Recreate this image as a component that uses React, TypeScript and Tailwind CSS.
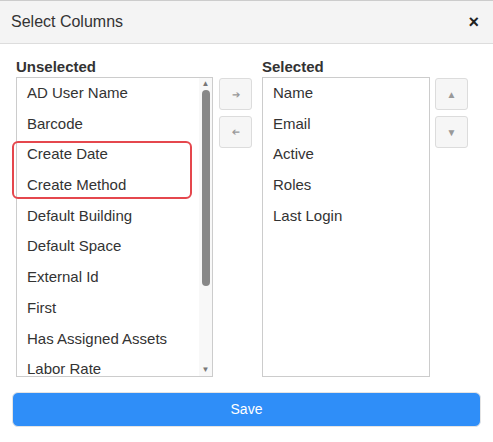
import React from 'react'

const unselected = ['AD User Name', 'Barcode', 'Create Date', 'Create Method', 'Default Building', 'Default Space', 'External Id', 'First', 'Has Assigned Assets', 'Labor Rate']
const selected = ['Name', 'Email', 'Active', 'Roles', 'Last Login']

function SmallBtn({ children }: { children: React.ReactNode }) {
  return (
    <button className="w-[33px] h-[32px] border border-[#dcdcdc] rounded-[3px] bg-[#f6f6f6] flex items-center justify-center text-[#999] text-[10px]">
      {children}
    </button>
  )
}

export default function App() {
  return (
    <div className="w-[493px] h-[442px] bg-white text-[#333] relative overflow-hidden" style={{ fontFamily: 'Arial, "Liberation Sans", sans-serif' }}>
      {/* Header */}
      <div className="h-[44px] bg-[#f4f4f4] border-b border-[#ddd] border-t border-t-[#ccc] flex items-center justify-between pl-[11px] pr-[14px]">
        <span className="text-[16px] text-[#333]">Select Columns</span>
        <span className="text-[18px] font-bold text-[#222]">×</span>
      </div>

      <div className="flex pl-[16px] pt-[13px] gap-[6px]">
        <div className="flex flex-col">
          <div className="text-[15px] font-bold h-[20px] leading-[20px]">Unselected</div>
          <div className="w-[197px] h-[300px] border border-[#ccc] flex relative">
            <div className="flex-1 overflow-hidden pt-[4px]">
              {unselected.map(u => (
                <div key={u} className="h-[30.7px] pl-[10px] text-[15px] leading-[22px]">{u}</div>
              ))}
            </div>
            <div className="w-[13px] bg-[#f8f8f8] flex flex-col items-center justify-between py-[2px]">
              <span className="text-[#777] text-[8px] leading-none">▲</span>
              <div className="w-[8px] flex-1 my-[2px] bg-[#888] rounded-full mb-[80px]" />
              <span className="text-[#777] text-[8px] leading-none">▼</span>
            </div>
          </div>
        </div>

        <div className="flex flex-col gap-[6px] pt-[21px]">
          <SmallBtn>➔</SmallBtn>
          <SmallBtn><span className="rotate-180 inline-block">➔</span></SmallBtn>
        </div>

        <div className="flex flex-col ml-[4px]">
          <div className="text-[15px] font-bold h-[20px] leading-[20px]">Selected</div>
          <div className="w-[168px] h-[300px] border border-[#ccc] pt-[4px]">
            {selected.map(s => (
              <div key={s} className="h-[30.7px] pl-[10px] text-[15px] leading-[22px]">{s}</div>
            ))}
          </div>
        </div>

        <div className="flex flex-col gap-[6px] pt-[21px] ml-[-1px]">
          <SmallBtn>▲</SmallBtn>
          <SmallBtn>▼</SmallBtn>
        </div>
      </div>

      <div className="px-[12px] pt-[15px]">
        <button className="w-full h-[35px] rounded-[6px] bg-[#2f8ef8] text-white text-[14px] border border-[#e4e4e4]">Save</button>
      </div>

      <div className="absolute left-[12px] top-[141px] w-[180px] h-[58px] border-2 border-[#e5474d] rounded-[6px]" />
    </div>
  )
}
